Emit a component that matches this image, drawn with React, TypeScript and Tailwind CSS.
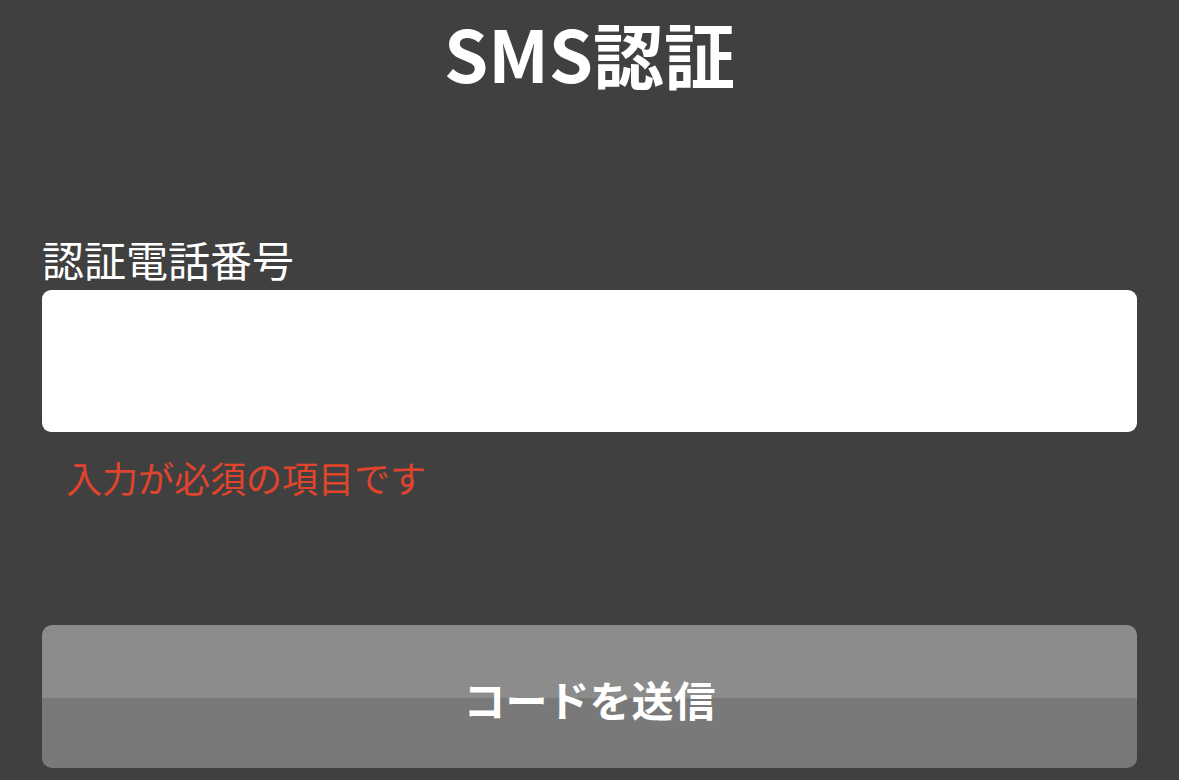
import React from 'react';

const App: React.FC = () => {
  return (
    <div
      className="min-h-[780px] w-full bg-[#404040] px-[42px] text-white"
      style={{ fontFamily: '"Noto Sans CJK JP", "Noto Sans", sans-serif' }}
    >
      {/* Title */}
      <h1 className="h-[104px] text-center text-[71px] font-bold leading-[104px]">SMS認証</h1>

      {/* Phone field */}
      <label className="mt-[130px] mb-[6px] block text-[42px] leading-[50px]">認証電話番号</label>
      <input type="tel" className="block h-[142px] w-full rounded-[9px] bg-white px-6 text-[40px] text-black outline-none" />
      <p className="mt-[23px] pl-[24px] text-[36px] leading-[44px] text-[#e0442c]">入力が必須の項目です</p>

      {/* Submit */}
      <button
        type="button"
        className="mt-[126px] flex h-[143px] w-full items-center justify-center rounded-[10px] bg-[linear-gradient(#8c8c8c_51%,#797979_51%)] pt-[4px] text-[42px] font-bold text-white"
      >
        コードを送信
      </button>
    </div>
  );
};

export default App;
